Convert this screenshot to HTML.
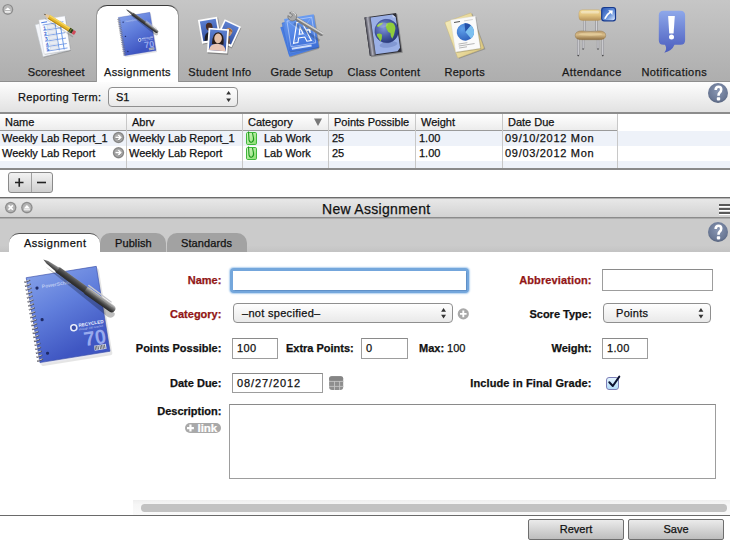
<!DOCTYPE html>
<html><head><meta charset="utf-8">
<style>
*{box-sizing:border-box;margin:0;padding:0}
html,body{width:730px;height:542px;overflow:hidden;background:#fff}
body{position:relative;font-family:"Liberation Sans",sans-serif;font-size:11px;color:#111;-webkit-text-stroke:0.25px currentColor}
.a{position:absolute}
.t{position:absolute;white-space:nowrap;line-height:13px}
#toolbar{left:0;top:0;width:730px;height:82px;background:linear-gradient(#c6c6c6,#aeaeae);border-bottom:1px solid #8e8e8e}
#seltab{left:97px;top:5px;width:81px;height:78px;background:#fff;border-radius:10px 10px 0 0;border-top:1px solid #3a3a3a;box-shadow:-1px 0 0 #9a9a9a,1px 0 0 #9a9a9a}
.tbl{top:66px;font-size:11px;color:#1a1a1a}
#rt{left:0;top:82px;width:730px;height:32px;background:linear-gradient(#fdfdfd,#e2e2e2);border-bottom:2px solid #8c8c8c}
.sel{background:linear-gradient(#fefefe,#e9e9e9);border:1px solid #8f8f8f;border-radius:4px}
.arr{position:absolute;font-size:7px;line-height:6px;color:#222}
#thead{left:0;top:114px;width:618px;height:17px;background:linear-gradient(#fff,#ececec);border-bottom:1px solid #9a9a9a}
.th{position:absolute;top:114px;height:17px;line-height:17px;padding-left:5px;white-space:nowrap}
.row{position:absolute;left:0;width:730px;height:15px}
.cs{position:absolute;top:114px;height:54px;width:1px;background:#c8c8c8}
.td{position:absolute;line-height:15px;white-space:nowrap}
.help{width:20px;height:20px;border-radius:50%;background:radial-gradient(circle at 50% 40%,#8190ad,#5f6e8b);color:#fff;font-weight:bold;font-size:15px;text-align:center;line-height:20px}
.inp{position:absolute;background:#fff;border:1px solid #9d9d9d;border-top-color:#8a8a8a}
.lbl{position:absolute;font-weight:bold;white-space:nowrap;line-height:13px;text-align:right}
.red{color:#921616}
.btn{position:absolute;border:1px solid #6e6e6e;border-radius:2px;background:linear-gradient(#ebebeb,#bdbdbd);text-align:center;line-height:19px}
</style></head><body>


<svg width="0" height="0" style="position:absolute">
<defs>
<linearGradient id="nbg" x1="0" y1="0" x2="0.3" y2="1">
<stop offset="0" stop-color="#829ee8"/><stop offset="0.45" stop-color="#617fdc"/><stop offset="1" stop-color="#3f56c2"/>
</linearGradient>
<radialGradient id="helpg" cx="0.5" cy="0.4" r="0.6"><stop offset="0" stop-color="#8896b2"/><stop offset="0.8" stop-color="#6a7895"/><stop offset="1" stop-color="#55627c"/></radialGradient>
<linearGradient id="peng" x1="0" y1="0" x2="0" y2="1">
<stop offset="0" stop-color="#cfcfcf"/><stop offset="0.35" stop-color="#7a7a7a"/><stop offset="0.7" stop-color="#3e3e3e"/><stop offset="1" stop-color="#262626"/>
</linearGradient>
<g id="notebook">
 <g transform="translate(16.2,27.7) rotate(-9.2)">
  <rect x="1" y="2" width="72" height="88" fill="#000" opacity="0.1" rx="2"/>
  <rect x="0" y="0" width="71" height="88" fill="#e8e8f0"/>
  <rect x="0" y="0" width="71" height="86" fill="url(#nbg)"/>
  <rect x="0" y="0" width="71" height="86" fill="none" stroke="#3a4ea8" stroke-width="0.6"/>
  <g fill="none" stroke="#4a4a55" stroke-width="1.5"><path d="M-2.5,4.2L3.5,3M-2.5,8.2L3.5,7M-2.5,12.2L3.5,11M-2.5,16.2L3.5,15M-2.5,20.2L3.5,19M-2.5,24.2L3.5,23M-2.5,28.2L3.5,27M-2.5,32.2L3.5,31M-2.5,36.2L3.5,35M-2.5,40.2L3.5,39M-2.5,44.2L3.5,43M-2.5,48.2L3.5,47M-2.5,52.2L3.5,51M-2.5,56.2L3.5,55M-2.5,60.2L3.5,59M-2.5,64.2L3.5,63M-2.5,68.2L3.5,67M-2.5,72.2L3.5,71M-2.5,76.2L3.5,75M-2.5,80.2L3.5,79M-2.5,84.2L3.5,83"/></g>
  <g fill="none" stroke="#e6e6ee" stroke-width="0.7"><path d="M-2.2,3.7L3,2.7M-2.2,7.7L3,6.7M-2.2,11.7L3,10.7M-2.2,15.7L3,14.7M-2.2,19.7L3,18.7M-2.2,23.7L3,22.7M-2.2,27.7L3,26.7M-2.2,31.7L3,30.7M-2.2,35.7L3,34.7M-2.2,39.7L3,38.7M-2.2,43.7L3,42.7M-2.2,47.7L3,46.7M-2.2,51.7L3,50.7M-2.2,55.7L3,54.7M-2.2,59.7L3,58.7M-2.2,63.7L3,62.7M-2.2,67.7L3,66.7M-2.2,71.7L3,70.7M-2.2,75.7L3,74.7M-2.2,79.7L3,78.7M-2.2,83.7L3,82.7"/></g>
  <circle cx="9" cy="12" r="1.6" fill="#1e2a66"/>
  <circle cx="9" cy="44" r="1.6" fill="#1e2a66"/>
  <circle cx="9" cy="78" r="1.6" fill="#1e2a66"/>
  <text x="14" y="13" font-family="Liberation Sans" font-size="5" font-weight="bold" fill="#c8d4f4" opacity="0.85">PowerSchool</text>
  <circle cx="39" cy="57" r="3.8" fill="#e8ecfa"/><circle cx="39" cy="57" r="2.2" fill="#3a4ea8"/>
  <text x="44" y="57" font-family="Liberation Sans" font-size="4.6" font-weight="bold" fill="#eef2ff">RECYCLED</text>
  <text x="44" y="60.5" font-family="Liberation Sans" font-size="2.6" fill="#c8d4f4">through 100 recycled</text>
  <text x="47" y="77" font-family="Liberation Sans" font-size="20" font-weight="bold" fill="#98aaee">70</text>
  <rect x="56" y="78" width="12" height="5" fill="#d8def0"/>
  <path d="M57,78.5v4M58.5,78.5v4M60,78.5v4M62,78.5v4M63.5,78.5v4M65,78.5v4M66.5,78.5v4" stroke="#333" stroke-width="0.6"/>
 </g>
 <g transform="translate(33.3,9.4) rotate(35.7) scale(1,1.2)">
  <path d="M6,4 L86,7.5 Q92,6.5 90,2 L80,0 Z" fill="#000" opacity="0.25"/>
  <path d="M0,0 L5,-1.3 L16,-2 L18,-2.7 L52,-2.9 L54,-3.3 L84,-3.2 Q88,-3 88,0 Q88,3 84,3.2 L54,3.3 L52,2.9 L18,2.7 L16,2 L5,1.3 Z" fill="url(#peng)"/>
  <path d="M18,-2.7 L52,-2.9 L52,2.9 L18,2.7 Z" fill="#2a2a2a" opacity="0.55"/>
  <path d="M52,-4.5 L80,-4.2" stroke="#c8c8cc" stroke-width="1.1" stroke-linecap="round"/>
  <path d="M58,-1.8 L84,-1.6" stroke="#9c9c9c" stroke-width="1" opacity="0.8"/>
 </g>
</g>
</defs></svg>

<!-- toolbar -->
<div id="toolbar" class="a"></div>
<div id="seltab" class="a"></div>


<svg class="a" style="left:10px;top:250px" width="120" height="125" viewBox="0 0 120 125"><use href="#notebook"/></svg>
<svg class="a" style="left:110.7px;top:5px" width="54" height="57" viewBox="0 0 120 126.7"><use href="#notebook"/></svg>

<svg class="a" style="left:30px;top:10px" width="50" height="50" viewBox="30 10 50 50">
 <g transform="translate(35.1,24.8) rotate(-14)">
  <rect x="0.5" y="1" width="27" height="33" fill="#000" opacity="0.15"/>
  <rect x="0" y="0" width="27" height="33" fill="#f4f6fa" stroke="#bfc4cc" stroke-width="0.4"/>
 </g>
 <g transform="translate(38.8,20.1) rotate(-9)">
  <rect x="0.6" y="0.8" width="26.5" height="34.5" fill="#000" opacity="0.18"/>
  <rect x="0" y="0" width="26.5" height="34.5" fill="#fbfcff" stroke="#c4c8d0" stroke-width="0.4"/>
  <g stroke="#5a86e0" stroke-width="0.7" fill="none">
   <path d="M3,5.5h21M3,11h21M3,16.5h21M3,22h21M3,27.5h21M3,32h21"/>
   <path d="M15.5,4v29M20.5,4v29" stroke="#6b9ae8" stroke-width="1"/>
  </g>
  <g fill="#2f5fd0" font-family="Liberation Sans" font-weight="bold" font-size="5">
   <text x="3" y="10.5">1</text><text x="3" y="16">2</text><text x="3" y="21.5">3</text><text x="3" y="27">4</text><text x="3" y="32">5</text>
  </g>
  <g fill="#e8ecf4" stroke="#b0b8c8" stroke-width="0.3">
   <rect x="7" y="6.5" width="8" height="3.5"/><rect x="7" y="12" width="8" height="3.5"/><rect x="7" y="17.5" width="8" height="3.5"/><rect x="7" y="23" width="8" height="3.5"/><rect x="7" y="28.5" width="8" height="3"/>
  </g>
  <path d="M2,3h6" stroke="#4a7ae0" stroke-width="1"/>
 </g>
 <g transform="translate(43.8,13.7) rotate(32) scale(1,0.8)">
  <path d="M3,3.5 L37,4.5 L37,6 L4,5 Z" fill="#000" opacity="0.15"/>
  <path d="M0,0 L6,-2.6 L6,2.6 Z" fill="#e8c89a"/>
  <path d="M0,0 L2,-0.9 L2,0.9 Z" fill="#333"/>
  <rect x="6" y="-2.6" width="24" height="5.2" fill="#e5b52a"/>
  <rect x="6" y="-2.6" width="24" height="1.7" fill="#f5d660"/>
  <rect x="6" y="1.4" width="24" height="1.2" fill="#b58a18"/>
  <rect x="30" y="-2.7" width="4" height="5.4" fill="#2b3a1a"/>
  <rect x="31" y="-2.7" width="1" height="5.4" fill="#7a8a30"/>
  <rect x="34" y="-2.5" width="3" height="5" rx="1" fill="#d04a5a"/>
 </g>
</svg>
<div class="tbl t" style="left:27.8px;letter-spacing:0.12px">Scoresheet</div>
<div class="tbl t" style="left:104px;letter-spacing:0.36px">Assignments</div>

<svg class="a" style="left:190px;top:10px" width="60" height="50" viewBox="190 10 60 50">
 <defs><linearGradient id="phbg" x1="0" y1="0" x2="0" y2="1"><stop offset="0" stop-color="#5c7fd0"/><stop offset="1" stop-color="#2f4e9e"/></linearGradient></defs>
 <g transform="translate(197.9,20.1) rotate(-10)">
  <rect x="0.8" y="1" width="19.5" height="24" fill="#000" opacity="0.25"/>
  <rect width="19.5" height="24" fill="#fdfdfd"/>
  <rect x="1.7" y="1.7" width="16.1" height="20" fill="url(#phbg)"/>
  <ellipse cx="10" cy="8.5" rx="3.3" ry="4" fill="#4a2c22"/>
  <path d="M3,21.7 Q4,13 10,13.5 Q16,13 17,21.7 Z" fill="#1c1c22"/>
 </g>
 <g transform="translate(224.7,19.2) rotate(25)">
  <rect x="0.8" y="1" width="18" height="22.5" fill="#000" opacity="0.25"/>
  <rect width="18" height="22.5" fill="#fdfdfd"/>
  <rect x="1.6" y="1.6" width="14.8" height="18.8" fill="url(#phbg)"/>
  <ellipse cx="9" cy="10" rx="3.5" ry="4.2" fill="#c89a70"/>
  <path d="M5.5,8.5 Q9,4.5 12.5,8.5 Z" fill="#a0602e"/>
  <path d="M3,20.4 Q4,14 9,14.5 Q14,14 15,20.4 Z" fill="#6e5040"/>
 </g>
 <g transform="translate(208.6,27.7) rotate(4)">
  <rect x="0.8" y="1.2" width="20.5" height="24.5" fill="#000" opacity="0.3"/>
  <rect width="20.5" height="24.5" fill="#fdfdfd"/>
  <rect x="1.8" y="1.8" width="16.9" height="20.4" fill="url(#phbg)"/>
  <path d="M4.5,16 Q4,4 10.2,3.8 Q16.5,4 16,16 Z" fill="#2a1c18"/>
  <ellipse cx="10.2" cy="10" rx="3.8" ry="4.8" fill="#e6c0a8"/>
  <path d="M1.8,22.2 Q3,15.5 10.2,15.5 Q17.5,15.5 18.7,22.2 Z" fill="#e8c4b4"/>
 </g>
</svg>
<div class="tbl t" style="left:188.3px;letter-spacing:0.32px">Student Info</div>

<svg class="a" style="left:272px;top:6px" width="60" height="56" viewBox="272 6 60 56">
 <defs><linearGradient id="gsbg" x1="0" y1="0" x2="0" y2="1"><stop offset="0" stop-color="#6b9cf0"/><stop offset="1" stop-color="#3d6fd8"/></linearGradient></defs>
 <g transform="translate(280.3,27.2) rotate(-17)">
  <rect x="0.8" y="1" width="30" height="31" fill="#000" opacity="0.2"/>
  <rect width="30" height="31" fill="#4a7de0"/>
 </g>
 <g transform="translate(282,23) rotate(-13)">
  <rect width="30" height="32" fill="#5587e6" stroke="#3565c8" stroke-width="0.4"/>
 </g>
 <g transform="translate(284.1,19) rotate(-9)">
  <rect x="0.8" y="1" width="30" height="33" fill="#000" opacity="0.2"/>
  <rect width="30" height="33" fill="url(#gsbg)"/>
  <rect x="2.5" y="2.5" width="25" height="26" fill="none" stroke="#dfe9ff" stroke-width="0.5"/>
  <path d="M3,2.5 L27,28.5 M27,2.5 L3,28.5" stroke="#bcd2ff" stroke-width="0.3"/>
  <path d="M5.5,25.5 L12,5.5 L17,5.5 L23.5,25.5 L19,25.5 L17.6,21 L11.4,21 L10,25.5 Z M12.5,17.5 L16.5,17.5 L14.5,10.5 Z" fill="none" stroke="#fff" stroke-width="1.1"/>
  <path d="M20,14.5h7M23.5,11v7" stroke="#fff" stroke-width="1.4"/>
  <rect x="3" y="29.5" width="20" height="2" fill="#e8f0ff" opacity="0.85"/>
 </g>
 <g transform="translate(294,17.5) rotate(31)">
  <path d="M3,3.5 L34,5.5 L34,8 L3,6.5 Z" fill="#000" opacity="0.18"/>
  <rect x="2" y="-2" width="32" height="4" rx="2" fill="#7c7c7c"/>
  <rect x="2" y="-1.8" width="32" height="1.7" rx="0.8" fill="#d0d0d0"/>
  <path d="M-6.24,-1.5 A4.5,4.5 0 1 1 -6.24,1.5 L-2.5,1.5 L-2.5,-1.5 Z" fill="#a8a8a8" stroke="#5e5e5e" stroke-width="0.5"/>
  <path d="M-5,-3 A3.3,3.3 0 0 1 0.5,-2.5" stroke="#e0e0e0" stroke-width="1" fill="none"/>
 </g>
</svg>
<div class="tbl t" style="left:270.6px;letter-spacing:0px">Grade Setup</div>

<svg class="a" style="left:356px;top:6px" width="54" height="58" viewBox="356 6 54 58">
 <defs>
  <linearGradient id="spine" x1="0" y1="0" x2="1" y2="0"><stop offset="0" stop-color="#3a3a44"/><stop offset="0.5" stop-color="#b0b0bc"/><stop offset="1" stop-color="#4a4a55"/></linearGradient>
  <radialGradient id="globe" cx="0.4" cy="0.35" r="0.7"><stop offset="0" stop-color="#7f94d8"/><stop offset="0.6" stop-color="#42559e"/><stop offset="1" stop-color="#243470"/></radialGradient>
 </defs>
 <g transform="translate(364.5,17.5) rotate(-8)">
  <rect x="1" y="1.2" width="32" height="39" fill="#000" opacity="0.25"/>
  <rect width="32" height="39" fill="#2e2e36"/>
  <rect width="6" height="39" fill="url(#spine)"/>
  <path d="M6,0.8 L28,0.8 L31,4 L31,35 L28,38 L6,38 Z" fill="#9bb0e6"/>
  <path d="M28,0.8 L31,4 L28,4 Z" fill="#cfd8ee"/>
  <ellipse cx="20" cy="30" rx="9" ry="3" fill="#6a7fc0" opacity="0.5"/>
  <circle cx="20" cy="16.5" r="11.8" fill="url(#globe)" stroke="#2d3c80" stroke-width="0.4"/>
  <path d="M21,9 Q25,7.5 28,10 Q30,14 28.5,17 Q27,22 24.5,25 Q23,22 23.5,19 Q21,18 20.5,15 Q19,12 21,9 Z" fill="#8fcc3c"/>
  <path d="M10,18 Q13,17 15,19.5 Q14.5,24 12.5,26 Q11.5,22 10,20 Z" fill="#8fcc3c"/>
  <path d="M11,9.5 Q14,7 18,7.5 Q16,10 13,11 Q11.5,12 11,9.5 Z" fill="#8fcc3c"/>
  <ellipse cx="17" cy="10" rx="5" ry="2.5" fill="#fff" opacity="0.2"/>
 </g>
</svg>
<div class="tbl t" style="left:347.6px;letter-spacing:0.28px">Class Content</div>

<svg class="a" style="left:438px;top:6px" width="56" height="56" viewBox="438 6 56 56">
 <defs>
  <linearGradient id="fold" x1="0" y1="0" x2="1" y2="1"><stop offset="0" stop-color="#f4eab8"/><stop offset="1" stop-color="#dcc880"/></linearGradient>
  <radialGradient id="pie" cx="0.35" cy="0.3" r="0.8"><stop offset="0" stop-color="#5fa0ea"/><stop offset="1" stop-color="#2a5cb8"/></radialGradient>
 </defs>
 <g transform="translate(444.8,22.4) rotate(-20)">
  <rect x="1" y="1" width="28" height="38" fill="#000" opacity="0.2"/>
  <rect width="28" height="38" rx="1" fill="url(#fold)" stroke="#c8b46a" stroke-width="0.4"/>
 </g>
 <g transform="translate(450.6,20) rotate(-9)">
  <rect x="0.8" y="1" width="25" height="32.5" fill="#000" opacity="0.2"/>
  <rect width="25" height="32.5" fill="#fafafa" stroke="#d0d0d0" stroke-width="0.3"/>
  <path d="M3,3h6" stroke="#555" stroke-width="1"/>
  <path d="M13,3h9" stroke="#999" stroke-width="0.4"/>
  <path d="M4,25h9M4,27h16M4,29h8" stroke="#777" stroke-width="0.5"/>
 </g>
 <g transform="translate(465.4,32) rotate(-9)">
  <circle r="8.7" fill="url(#pie)"/>
  <path d="M0,0 L0.5,-8.7 A8.7,8.7 0 0 1 6.5,-5.8 Z" fill="#2450a8"/>
  <path d="M0,0 L6.5,-5.8 A8.7,8.7 0 0 1 4.5,7.4 Z" fill="#7cc0f0"/>
 </g>
</svg>
<div class="tbl t" style="left:444.4px;letter-spacing:0.3px">Reports</div>

<svg class="a" style="left:570px;top:4px" width="50" height="56" viewBox="570 4 50 56">
 <defs>
  <linearGradient id="tan1" x1="0" y1="0" x2="0" y2="1"><stop offset="0" stop-color="#f2dc9c"/><stop offset="0.5" stop-color="#e2c480"/><stop offset="1" stop-color="#b8945a"/></linearGradient>
  <linearGradient id="tan2" x1="0" y1="0" x2="0" y2="1"><stop offset="0" stop-color="#b89868"/><stop offset="0.45" stop-color="#d8bc88"/><stop offset="1" stop-color="#8e6e40"/></linearGradient>
  <linearGradient id="badge" x1="0" y1="0" x2="1" y2="1"><stop offset="0" stop-color="#2d5ab8"/><stop offset="0.6" stop-color="#6c96dc"/><stop offset="1" stop-color="#e0ecff"/></linearGradient>
 </defs>
 <g stroke="#7a7a80" stroke-width="2.2">
  <path d="M584.8,20v11M596.3,20v11"/>
  <path d="M583.1,38v11M598,38v11"/>
  <path d="M578.2,38v17.5M602.8,38v17.5"/>
 </g>
 <g stroke="#dcdce0" stroke-width="1.2">
  <path d="M584.8,20v11M596.3,20v11"/>
  <path d="M583.1,38v11M598,38v11"/>
  <path d="M578.2,38v17.5M602.8,38v17.5"/>
 </g>
 <circle cx="583.1" cy="49" r="0.8" fill="#444"/><circle cx="598" cy="49" r="0.8" fill="#444"/>
 <circle cx="578.2" cy="55.6" r="0.8" fill="#444"/><circle cx="602.8" cy="55.6" r="0.8" fill="#444"/>
 <rect x="578.9" y="9.7" width="22.7" height="10.8" rx="3.5" fill="url(#tan1)" stroke="#b0904e" stroke-width="0.3"/>
 <rect x="581" y="11" width="18" height="2.5" rx="1.2" fill="#fff" opacity="0.35"/>
 <path d="M575.2,35.5 Q575.2,30.9 582,30.9 Q590.5,32 599,30.9 Q605.7,30.9 605.7,35.5 Q605.7,39.7 599,39.7 L582,39.7 Q575.2,39.7 575.2,35.5 Z" fill="url(#tan2)" stroke="#8c6c3c" stroke-width="0.4"/>
 <ellipse cx="590.5" cy="34.2" rx="12" ry="1.6" fill="#f4e0b0" opacity="0.45"/>
 <rect x="601.1" y="6.9" width="15" height="14.5" rx="3" fill="#173a8e"/>
 <rect x="602.3" y="8.1" width="12.6" height="12.1" rx="2" fill="url(#badge)"/>
 <path d="M604.8,18.8 Q606.5,14.5 610.8,11.8" stroke="#fff" stroke-width="1.7" fill="none"/>
 <path d="M608.2,10.2 L612.8,10.5 L612.3,15 Z" fill="#fff"/>
</svg>
<svg class="a" style="left:652px;top:6px" width="40" height="52" viewBox="652 6 40 52">
 <defs><linearGradient id="bub" x1="0" y1="0" x2="0" y2="1"><stop offset="0" stop-color="#8ea8ea"/><stop offset="1" stop-color="#4a5cbe"/></linearGradient></defs>
 <path d="M663.5,10.7 L680.5,10.7 Q685.1,10.7 685.1,15.3 L685.1,40.2 Q685.1,44.8 680.5,44.8 L674.5,44.8 Q672,51 664.3,52.8 Q667.5,49 665,44.8 L663.5,44.8 Q658.8,44.8 658.8,40.2 L658.8,15.3 Q658.8,10.7 663.5,10.7 Z" fill="url(#bub)"/>
 <path d="M668.1,15.9 L674.8,15.9 L673.6,33.4 L669.2,33.4 Z" fill="#fff"/>
 <circle cx="671.5" cy="36.9" r="2.5" fill="#fff"/>
</svg>
<div class="tbl t" style="left:562px;letter-spacing:0.4px">Attendance</div>
<div class="tbl t" style="left:641.4px;letter-spacing:0.45px">Notifications</div>

<!-- reporting term -->
<div id="rt" class="a"></div>
<div class="t" style="left:18px;top:91px;letter-spacing:0.35px">Reporting Term:</div>
<div class="a sel" style="left:108px;top:87px;width:130px;height:20px"></div>
<div class="t" style="left:116px;top:91px">S1</div>
<svg class="a" style="left:706px;top:81px" width="24" height="24" viewBox="706 81 24 24"><circle cx="718" cy="93" r="10" fill="url(#helpg)"/><path d="M715.7,90 Q715.7,86.8 718.5,86.8 Q721.2,86.8 721.2,89.4 Q721.2,91.3 719.8,92.4 Q718.5,93.5 718.5,95.8" stroke="#fff" stroke-width="2.6" fill="none"/><rect x="716.8" y="97.2" width="3.4" height="3.2" rx="0.8" fill="#fff"/></svg>

<!-- table -->
<div id="thead" class="a"></div>
<div class="row" style="top:131px;background:#eef2f9"></div>
<div class="row" style="top:146px;background:#fff"></div>
<div class="row" style="top:161px;height:7px;background:#eef2f9"></div>
<div class="a" style="left:0;top:168px;width:730px;height:2px;background:#8a8a8a"></div>
<div class="th" style="left:0;width:127px">Name</div>
<div class="th" style="left:127px;width:116px">Abrv</div>
<div class="th" style="left:243px;width:86px">Category</div>
<div class="th" style="left:329px;width:87px">Points Possible</div>
<div class="th" style="left:416px;width:87px">Weight</div>
<div class="th" style="left:503px;width:115px">Date Due</div>
<div class="cs" style="left:126px"></div>
<div class="cs" style="left:242px"></div>
<div class="cs" style="left:328px"></div>
<div class="cs" style="left:415px"></div>
<div class="cs" style="left:502px"></div>
<div class="cs" style="left:617px"></div>

<div class="td" style="left:2px;top:131px">Weekly Lab Report_1</div>
<div class="td" style="left:2px;top:146px">Weekly Lab Report</div>
<div class="td" style="left:129px;top:131px">Weekly Lab Report_1</div>
<div class="td" style="left:129px;top:146px">Weekly Lab Report</div>
<div class="td" style="left:264px;top:131px">Lab Work</div>
<div class="td" style="left:264px;top:146px">Lab Work</div>
<div class="td" style="left:332px;top:131px">25</div>
<div class="td" style="left:332px;top:146px">25</div>
<div class="td" style="left:419px;top:131px">1.00</div>
<div class="td" style="left:419px;top:146px">1.00</div>
<div class="td" style="left:505px;top:131px;letter-spacing:0.7px">09/10/2012 Mon</div>
<div class="td" style="left:505px;top:146px;letter-spacing:0.7px">09/03/2012 Mon</div>


<!-- small table icons -->
<svg class="a" style="left:0;top:110px" width="330" height="60" viewBox="0 110 330 60">
 <defs>
  <radialGradient id="arc" cx="0.5" cy="0.5" r="0.5"><stop offset="0" stop-color="#bcbcbc"/><stop offset="0.65" stop-color="#a8a8a8"/><stop offset="0.85" stop-color="#828282"/><stop offset="1" stop-color="#9a9a9a"/></radialGradient>
  <linearGradient id="clipg" x1="0" y1="0" x2="1" y2="1"><stop offset="0" stop-color="#d8f8c8"/><stop offset="1" stop-color="#86dc6c"/></linearGradient>
 </defs>
 <g>
  <circle cx="118.5" cy="137.5" r="5.7" fill="url(#arc)"/>
  <path d="M115.5,138.3h4.5M118.3,135.8l2.4,2.5l-2.4,2.5" stroke="#444" stroke-width="1.3" fill="none" opacity="0.6"/>
  <path d="M115.5,137.5h4.5M118.3,135l2.4,2.5l-2.4,2.5" stroke="#fff" stroke-width="1.5" fill="none"/>
  <circle cx="118.5" cy="152.7" r="5.7" fill="url(#arc)"/>
  <path d="M115.5,153.5h4.5M118.3,151l2.4,2.5l-2.4,2.5" stroke="#444" stroke-width="1.3" fill="none" opacity="0.6"/>
  <path d="M115.5,152.7h4.5M118.3,150.2l2.4,2.5l-2.4,2.5" stroke="#fff" stroke-width="1.5" fill="none"/>
 </g>
 <path d="M314,118.5h8l-4,7.5z" fill="#787878"/>
 <g id="clip1">
  <rect x="246.5" y="132.5" width="10" height="12" rx="1.2" fill="url(#clipg)" stroke="#40b83c" stroke-width="1"/>
  <path d="M248.5,131.5 L249,140 Q250,143 252,142 Q254,141 253.5,138 L252.5,133" stroke="#1c9a1c" stroke-width="1.1" fill="none"/>
 </g>
 <g transform="translate(0,15)">
  <rect x="246.5" y="132.5" width="10" height="12" rx="1.2" fill="url(#clipg)" stroke="#40b83c" stroke-width="1"/>
  <path d="M248.5,131.5 L249,140 Q250,143 252,142 Q254,141 253.5,138 L252.5,133" stroke="#1c9a1c" stroke-width="1.1" fill="none"/>
 </g>
</svg>

<!-- +/- buttons -->
<div class="a" style="left:8px;top:172px;width:45px;height:21px;border:1px solid #8a8a8a;border-radius:3px;background:linear-gradient(#f2f2f2,#cfcfcf)"></div>
<div class="a" style="left:31px;top:173px;width:1px;height:19px;background:#a0a0a0"></div>

<!-- divider + title bar -->
<div class="a" style="left:0;top:197px;width:730px;height:22px;background:linear-gradient(#eaeaea,#d0d0d0)"></div>
<div class="a" style="left:0;top:197px;width:730px;height:1px;background:#6c6c6c"></div>
<div class="a" style="left:0;top:198px;width:730px;height:1px;background:#b4b4b4"></div>
<div class="a" style="left:0;top:217px;width:730px;height:1px;background:#8c8c8c"></div>
<div class="a" style="left:0;top:218px;width:730px;height:1px;background:#adadad"></div>
<div class="t" style="left:322px;top:201px;font-size:14px;line-height:16px;letter-spacing:0.3px;color:#111">New Assignment</div>


<!-- +/- symbols -->
<svg class="a" style="left:8px;top:172px" width="46" height="22" viewBox="8 172 46 22">
 <path d="M15,182.5h8.5M19.25,178.2v8.6" stroke="#222" stroke-width="1.6"/>
 <path d="M37,182.5h9" stroke="#222" stroke-width="1.6"/>
</svg>
<!-- title bar controls -->
<svg class="a" style="left:0;top:198px" width="40" height="20" viewBox="0 198 40 20">
 <defs><radialGradient id="tbc" cx="0.5" cy="0.5" r="0.5"><stop offset="0" stop-color="#c4c4c4"/><stop offset="0.7" stop-color="#b0b0b0"/><stop offset="0.85" stop-color="#8a8a8a"/><stop offset="1" stop-color="#9a9a9a"/></radialGradient></defs>
 <circle cx="10.7" cy="207.6" r="5.8" fill="url(#tbc)"/>
 <path d="M8.5,205.4l4.4,4.4M12.9,205.4l-4.4,4.4" stroke="#fff" stroke-width="1.6"/>
 <circle cx="26.9" cy="207.6" r="5.8" fill="url(#tbc)"/>
 <path d="M23.8,208.6l3.1,-3.5l3.1,3.5z" fill="#fff"/>
 <rect x="23.8" y="209.3" width="6.2" height="1" fill="#fff"/>
</svg>
<div class="a" style="left:719px;top:204px;width:11px;height:2px;background:#5a5a5a;box-shadow:0 1px 0 #fff"></div>
<div class="a" style="left:719px;top:208px;width:11px;height:2px;background:#5a5a5a;box-shadow:0 1px 0 #fff"></div>
<div class="a" style="left:719px;top:212px;width:11px;height:2px;background:#5a5a5a;box-shadow:0 1px 0 #fff"></div>
<!-- toolbar eject -->
<svg class="a" style="left:0;top:2px" width="16" height="16" viewBox="0 2 16 16">
 <circle cx="7.8" cy="9.4" r="5.5" fill="url(#tbc)"/>
 <circle cx="7.8" cy="9.4" r="3.8" fill="#b9b9b9"/>
 <path d="M4.9,10l2.85,-2.4l2.85,2.4z" fill="#fff"/>
 <rect x="4.9" y="11.1" width="5.7" height="1.6" fill="#f0f0f0"/>
</svg>

<!-- tab strip -->
<div class="a" style="left:0;top:219px;width:730px;height:33px;background:linear-gradient(#cbcbcb 80%,#c3c3c3)"></div>
<div class="a" style="left:9px;top:233px;width:91px;height:19px;background:#fff;border-radius:10px 10px 0 0;border-top:1px solid #555"></div>
<div class="a" style="left:100px;top:233px;width:66px;height:19px;background:#a2a2a2;border-radius:10px 10px 0 0"></div>
<div class="a" style="left:167px;top:233px;width:80px;height:19px;background:#a2a2a2;border-radius:10px 10px 0 0"></div>
<div class="t" style="left:24px;top:237px;letter-spacing:0.5px">Assignment</div>
<div class="t" style="left:115px;top:237px;letter-spacing:0.1px">Publish</div>
<div class="t" style="left:181px;top:237px;letter-spacing:0.1px">Standards</div>
<svg class="a" style="left:706px;top:220px" width="24" height="24" viewBox="706 81 24 24"><circle cx="718" cy="93" r="10" fill="url(#helpg)"/><path d="M715.7,90 Q715.7,86.8 718.5,86.8 Q721.2,86.8 721.2,89.4 Q721.2,91.3 719.8,92.4 Q718.5,93.5 718.5,95.8" stroke="#fff" stroke-width="2.6" fill="none"/><rect x="716.8" y="97.2" width="3.4" height="3.2" rx="0.8" fill="#fff"/></svg>


<!-- form -->
<div class="lbl red" style="left:120.4px;width:101px;top:274px">Name:</div>
<div class="a" style="left:230px;top:267.5px;width:239px;height:25px;border-radius:4px;background:#74a7dc;box-shadow:0 0 1.5px 0.5px #b4d2f0"></div>
<div class="a" style="left:233px;top:271px;width:233px;height:19px;background:#fff;box-shadow:0 0 1px 0.5px #5f90c8"></div>

<div class="lbl red" style="left:120.4px;width:101px;top:308px">Category:</div>
<div class="a sel" style="left:233px;top:303px;width:220px;height:20px;border-radius:4px"></div>
<div class="t" style="left:242px;top:307px;letter-spacing:0.3px">–not specified–</div>




<div class="lbl red" style="left:479.6px;width:112px;top:274px;letter-spacing:0.12px">Abbreviation:</div>
<div class="inp" style="left:602px;top:269px;width:111px;height:22px"></div>
<div class="lbl" style="left:479.6px;width:112px;top:308px">Score Type:</div>
<div class="a sel" style="left:603px;top:303px;width:108px;height:20px"></div>
<div class="t" style="left:616px;top:307px;letter-spacing:0.3px">Points</div>

<div class="lbl" style="left:120.4px;width:101px;top:342px">Points Possible:</div>
<div class="inp" style="left:232px;top:338px;width:46px;height:21px"></div>
<div class="t" style="left:237px;top:342px;letter-spacing:0.4px">100</div>
<div class="lbl" style="left:279.8px;width:74px;top:342px">Extra Points:</div>
<div class="inp" style="left:361px;top:338px;width:47px;height:21px"></div>
<div class="t" style="left:366px;top:342px">0</div>
<div class="t" style="left:419px;top:342px"><b>Max:</b> 100</div>
<div class="lbl" style="left:479.6px;width:112px;top:342px">Weight:</div>
<div class="inp" style="left:602px;top:338px;width:46px;height:21px"></div>
<div class="t" style="left:607px;top:342px;letter-spacing:0.3px">1.00</div>

<div class="lbl" style="left:120.4px;width:101px;top:377px">Date Due:</div>
<div class="inp" style="left:232px;top:373px;width:91px;height:20px"></div>
<div class="t" style="left:237px;top:377px;letter-spacing:0.9px">08/27/2012</div>
<svg class="a" style="left:328px;top:375px" width="17" height="17" viewBox="328 375 17 17">
 <rect x="329.1" y="376.3" width="14.1" height="13.6" rx="3" fill="#8e8e8e"/>
 <rect x="329.1" y="376.3" width="14.1" height="4.6" rx="2.5" fill="#858585"/>
 <path d="M329,381.4h14.4M329,386.4h14.4M334.5,381v9M339.6,381v9" stroke="#c4c4c4" stroke-width="0.9"/>
</svg>
<div class="lbl" style="left:439.6px;width:152px;top:377px;letter-spacing:0.12px">Include in Final Grade:</div>
<div class="a" style="left:606px;top:377px;width:13px;height:13px;border:1px solid #7d7fb8;border-radius:3px;background:linear-gradient(#e4f4ff,#b4dcf8)"></div>
<svg class="a" style="left:604px;top:372px" width="20" height="20" viewBox="604 372 20 20">
 <path d="M609.3,382.3 L612.8,386 L619.3,376.6" stroke="#0c1230" stroke-width="2" fill="none" stroke-linecap="round" stroke-linejoin="round"/>
</svg>

<div class="lbl" style="left:120.4px;width:101px;top:405px">Description:</div>
<div class="a" style="left:185px;top:422.7px;width:35.5px;height:10.8px;border-radius:5.4px;background:#a9a9a9"></div>
<svg class="a" style="left:185px;top:422px" width="12" height="12" viewBox="185 422 12 12"><path d="M187,428.1h6.9M190.45,424.6v7" stroke="#fff" stroke-width="2.2"/></svg>
<div class="t" style="left:197.6px;top:421.5px;color:#fff;font-weight:bold;font-size:11.5px;line-height:13px;letter-spacing:-0.1px;-webkit-text-stroke:0.2px #fff">link</div>
<div class="inp" style="left:229px;top:404px;width:487px;height:75px"></div>

<!-- scroller -->
<div class="a" style="left:133px;top:500px;width:597px;height:15px;background:linear-gradient(#eeeeee,#f6f6f6 30%,#fafafa)"></div>
<div class="a" style="left:140.6px;top:504.4px;width:586.4px;height:7.4px;border-radius:3.7px;background:#c2c2c2"></div>
<div class="a" style="left:0;top:515px;width:730px;height:1px;background:#6a6a6a"></div>
<div class="a" style="left:0;top:516px;width:730px;height:26px;background:#fff"></div>
<div class="btn" style="left:528px;top:519px;width:96px;height:21px">Revert</div>
<div class="btn" style="left:628px;top:519px;width:96px;height:21px">Save</div>
<svg class="a" style="left:0;top:80px" width="730" height="250" viewBox="0 80 730 250">
 <path d="M226.2,94.5h4.8l-2.4,-3.6z M226.2,98.5h4.8l-2.4,3.6z" fill="#333"/>
 <path d="M441.1,311.7h4.9l-2.45,-3.7z M441.1,314.8h4.9l-2.45,3.7z" fill="#333"/>
 <path d="M698.5,311.7h4.9l-2.45,-3.7z M698.5,314.8h4.9l-2.45,3.7z" fill="#333"/>
 <circle cx="463.3" cy="313.9" r="5.6" fill="#a9a9a9"/>
 <path d="M460,313.9h6.6M463.3,310.6v6.6" stroke="#fff" stroke-width="1.9"/>
</svg>
</body></html>
